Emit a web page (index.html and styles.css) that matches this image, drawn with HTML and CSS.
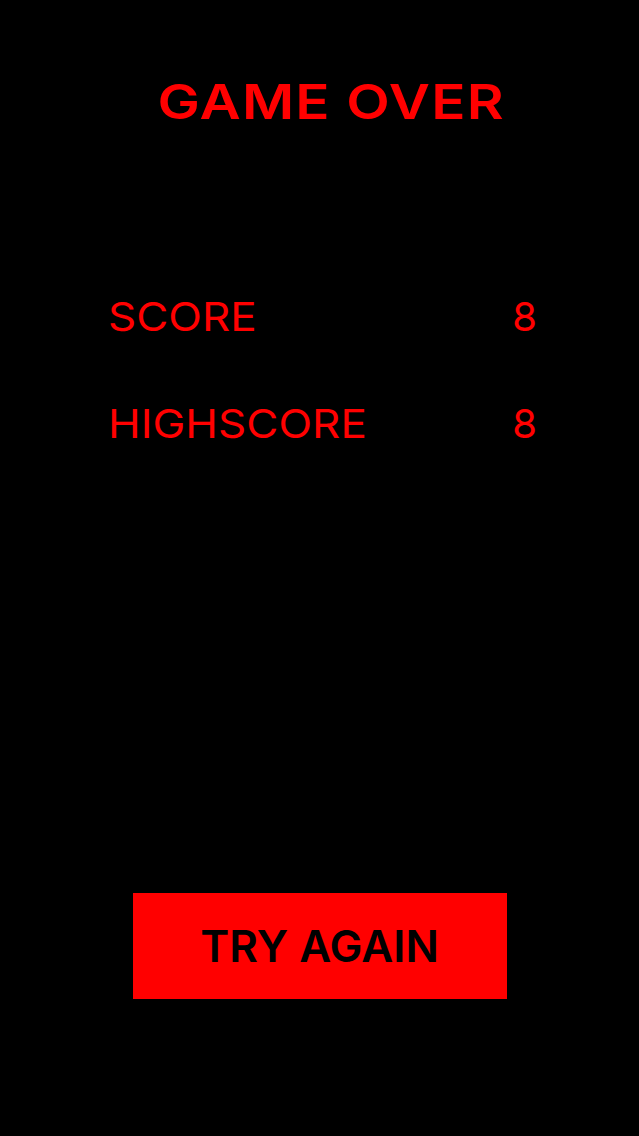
FILE: index.html
```html
<!DOCTYPE html>
<html lang="en">
<head>
  <meta charset="UTF-8">
  <meta name="viewport" content="width=device-width, initial-scale=1">
  <title>Game Over</title>
  <link rel="stylesheet" href="styles.css">
</head>
<body>
  <main class="screen">
    <h1 class="title"><span class="title-text">GAME OVER</span></h1>

    <!-- Ergebnisse -->
    <section class="scores">
      <div class="score-row">
        <span class="score-label">SCORE</span>
        <span class="score-value" id="score">8</span>
      </div>
      <div class="score-row">
        <span class="score-label">HIGHSCORE</span>
        <span class="score-value" id="highscore">8</span>
      </div>
    </section>

    <button class="retry-button" id="retry">TRY AGAIN</button>
  </main>
</body>
</html>
```

FILE: styles.css
```css
/* Game Over Screen */
:root {
  --bg: #000000;
  --accent: #ff0000;
}

* {
  margin: 0;
  padding: 0;
  box-sizing: border-box;
}

body {
  background-color: var(--bg);
  color: var(--accent);
  font-family: 'Inter', 'Liberation Sans', sans-serif;
}

.screen {
  height: 1136px;
  display: flex;
  flex-direction: column;
  padding: 78px 0 137px;
}

.title {
  font-size: 48px;
  font-weight: 600;
  line-height: 1;
  text-align: center;
  padding-left: 24px;
}

/* breite Schrift fuer die Ueberschrift */
.title-text {
  display: inline-block;
  letter-spacing: 1px;
  transform: scaleX(1.18);
}

.scores {
  margin-top: 171px;
  padding: 0 102px 0 108px;
  display: flex;
  flex-direction: column;
  gap: 67px;
}

.score-row {
  display: flex;
  justify-content: space-between;
  font-size: 40px;
  line-height: 1;
}

.score-label {
  display: inline-block;
  transform: scaleX(1.1);
  transform-origin: left center;
}

.retry-button {
  margin: auto auto 0;
  width: 374px;
  height: 106px;
  background-color: var(--accent);
  color: #000;
  border: none;
  font-family: inherit;
  font-size: 44px;
  font-weight: 600;
  cursor: pointer;
}
```
